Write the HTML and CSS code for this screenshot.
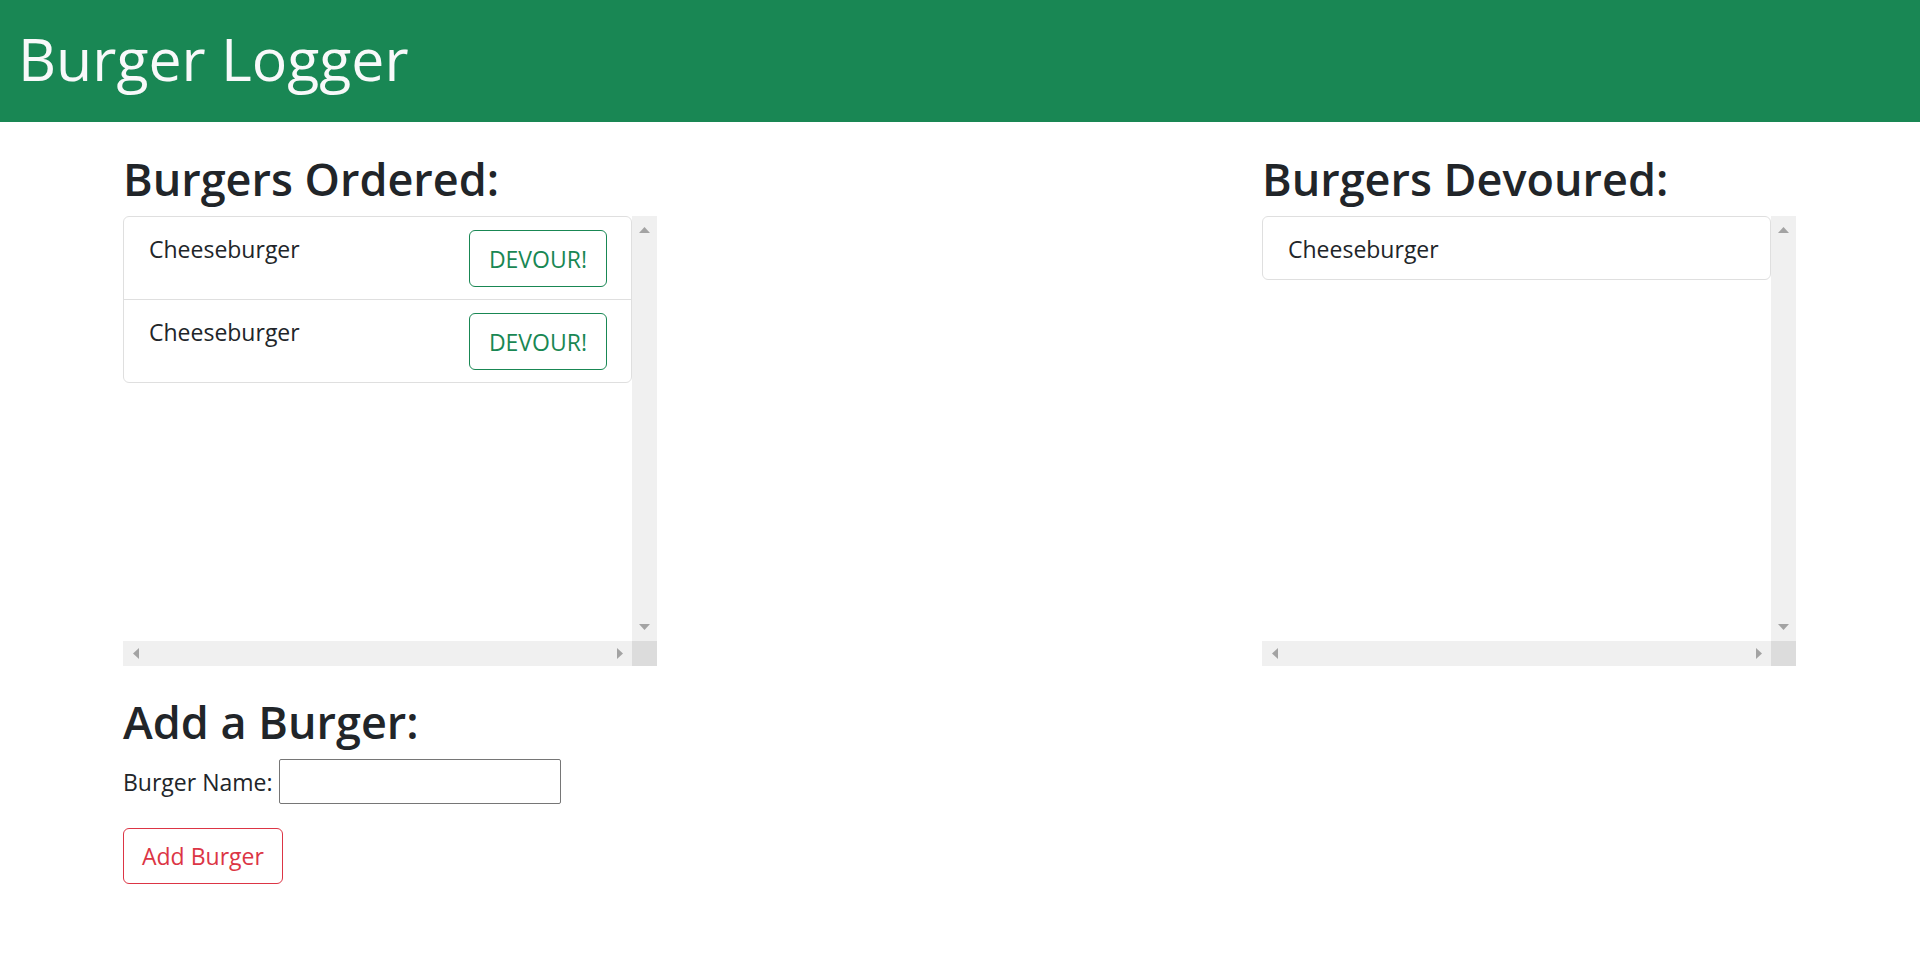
FILE: index.html
```html
<!DOCTYPE html>
<html lang="en">
<head>
<meta charset="utf-8">
<title>Burger Logger</title>
<link rel="stylesheet" href="styles.css">
</head>
<body>
<header class="navbar">
  <h1 class="brand">Burger Logger</h1>
</header>
<main class="container">
  <div class="row">
    <section class="col">
      <h2 class="section-title">Burgers Ordered:</h2>
      <div class="scrollbox">
        <div class="viewport">
          <ul class="list-group">
            <li class="list-item"><span class="item-name">Cheeseburger</span><button class="btn btn-success-outline" type="button">DEVOUR!</button></li>
            <li class="list-item"><span class="item-name">Cheeseburger</span><button class="btn btn-success-outline" type="button">DEVOUR!</button></li>
          </ul>
        </div>
        <div class="vbar">
          <svg class="arrow" width="11" height="6" viewBox="0 0 11 6"><path d="M0 6 L5.5 0 L11 6 Z"/></svg>
          <svg class="arrow" width="11" height="6" viewBox="0 0 11 6"><path d="M0 0 L5.5 6 L11 0 Z"/></svg>
        </div>
        <div class="hbar">
          <svg class="arrow" width="6" height="11" viewBox="0 0 6 11"><path d="M6 0 L0 5.5 L6 11 Z"/></svg>
          <svg class="arrow" width="6" height="11" viewBox="0 0 6 11"><path d="M0 0 L6 5.5 L0 11 Z"/></svg>
        </div>
        <div class="corner"></div>
      </div>
    </section>
    <section class="col">
      <h2 class="section-title">Burgers Devoured:</h2>
      <div class="scrollbox">
        <div class="viewport">
          <ul class="list-group">
            <li class="list-item"><span class="item-name">Cheeseburger</span></li>
          </ul>
        </div>
        <div class="vbar">
          <svg class="arrow" width="11" height="6" viewBox="0 0 11 6"><path d="M0 6 L5.5 0 L11 6 Z"/></svg>
          <svg class="arrow" width="11" height="6" viewBox="0 0 11 6"><path d="M0 0 L5.5 6 L11 0 Z"/></svg>
        </div>
        <div class="hbar">
          <svg class="arrow" width="6" height="11" viewBox="0 0 6 11"><path d="M6 0 L0 5.5 L6 11 Z"/></svg>
          <svg class="arrow" width="6" height="11" viewBox="0 0 6 11"><path d="M0 0 L6 5.5 L0 11 Z"/></svg>
        </div>
        <div class="corner"></div>
      </div>
    </section>
  </div>
  <h2 class="section-title form-title">Add a Burger:</h2>
  <form class="add-form">
    <div class="form-row">
      <label for="burger-name">Burger Name:</label>
      <input id="burger-name" class="text-input" type="text">
    </div>
    <button class="btn btn-danger-outline" type="button">Add Burger</button>
  </form>
</main>
</body>
</html>
```
FILE: styles.css
```css
* {
  box-sizing: border-box;
}

html, body {
  margin: 0;
  padding: 0;
  background: #ffffff;
}

body {
  font-family: "Open Sans", "Noto Sans", "Liberation Sans", sans-serif;
  font-size: 23px;
  line-height: 36px;
  color: #212529;
}

.navbar {
  height: 122px;
  background: #198754;
  padding: 23px 18px 0;
}

.brand {
  margin: 0;
  font-size: 59px;
  font-weight: 400;
  line-height: 1.2;
  color: #f8f9fa;
}

.container {
  padding: 0 124px 0 123px;
}

.row {
  display: flex;
  justify-content: space-between;
}

.col {
  width: 534px;
}

.section-title {
  margin: 30px 0 10px;
  font-size: 45px;
  font-weight: 600;
  line-height: 54px;
  color: #212529;
}

.form-title {
  margin-top: 29px;
}

.scrollbox {
  display: grid;
  grid-template-columns: 1fr 25px;
  grid-template-rows: 1fr 25px;
  height: 450px;
}

.viewport {
  overflow: hidden;
}

.list-group {
  list-style: none;
  margin: 0;
  padding: 0;
  border: 1px solid #dfdfdf;
  border-radius: 6px;
}

.list-item {
  display: flex;
  justify-content: space-between;
  align-items: flex-start;
  padding: 13px 24px 12px 25px;
  border-top: 1px solid #dfdfdf;
}

.list-item:first-child {
  border-top: 0;
}

.item-name {
  padding-top: 1px;
}

.btn {
  display: inline-flex;
  align-items: center;
  justify-content: center;
  height: 57px;
  padding: 0 19px;
  background: #ffffff;
  border: 1px solid;
  border-radius: 6px;
  font-family: inherit;
  font-size: 23px;
  line-height: 36px;
}

.btn-success-outline {
  color: #198754;
  border-color: #198754;
}

.btn-danger-outline {
  margin-top: 24px;
  height: 56px;
  padding: 0 18px;
  color: #dc3545;
  border-color: #dc3545;
}

.vbar {
  background: #f0f0f0;
  display: flex;
  flex-direction: column;
  justify-content: space-between;
  align-items: center;
  padding: 11px 0;
}

.hbar {
  background: #f0f0f0;
  display: flex;
  justify-content: space-between;
  align-items: center;
  padding: 0 9px 0 10px;
}

.corner {
  background: #dcdcdc;
}

.arrow {
  display: block;
  fill: #a3a3a3;
}

.add-form {
  margin: 0;
}

.form-row {
  display: flex;
  align-items: center;
  gap: 6px;
}

.text-input {
  width: 282px;
  height: 45px;
  border: 1px solid #767676;
  border-radius: 2px;
  background: #ffffff;
  font-family: inherit;
  font-size: 20px;
}
```
